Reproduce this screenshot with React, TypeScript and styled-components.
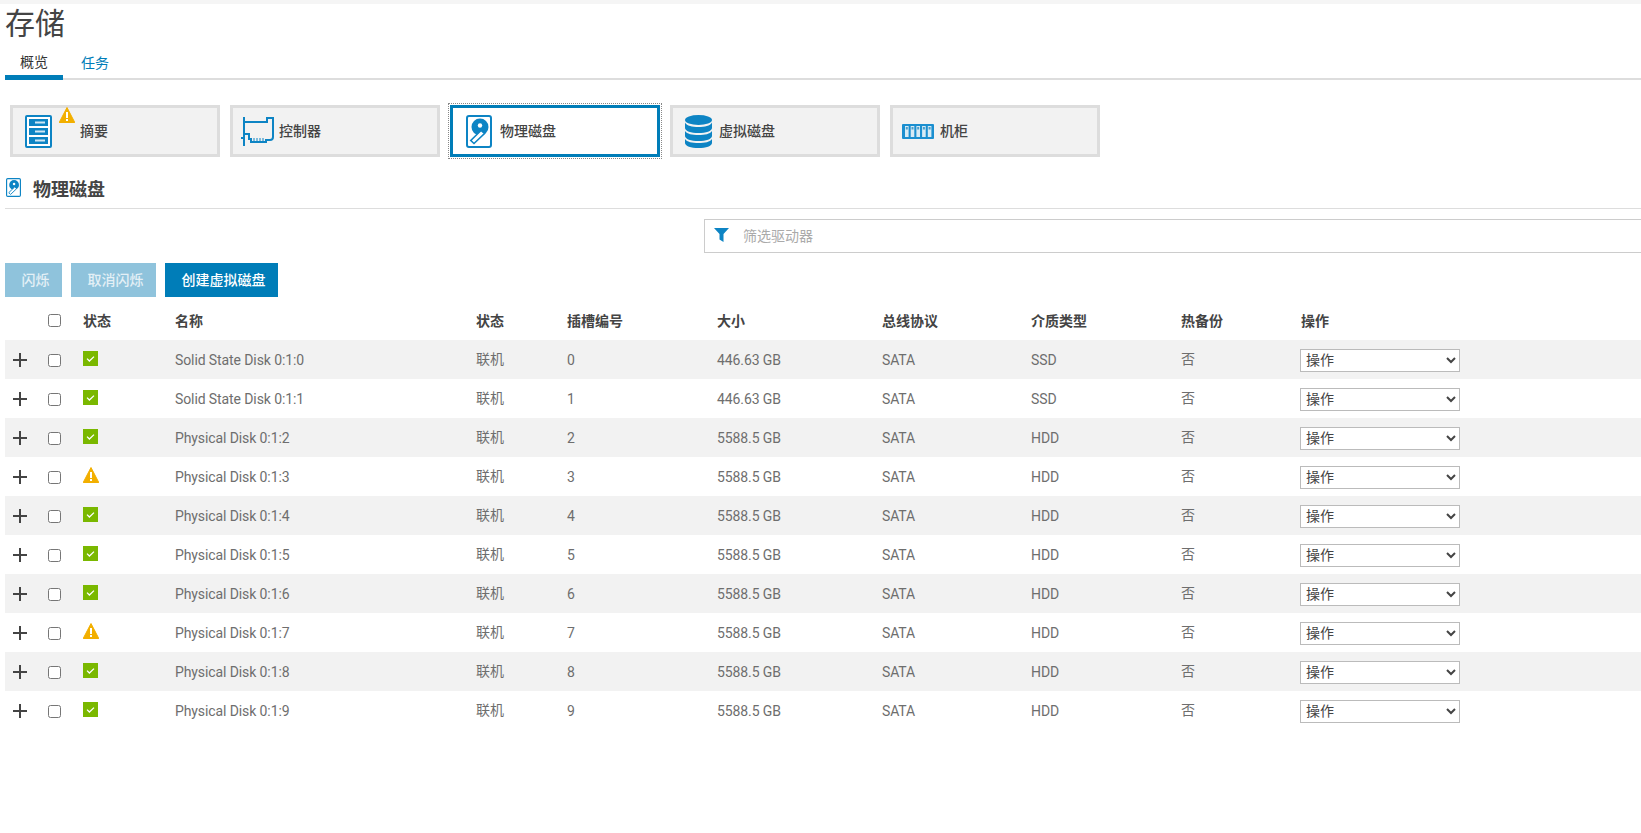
import styled, { createGlobalStyle } from "styled-components";

const GlobalStyle = createGlobalStyle`
  html, body {
    margin: 0;
    padding: 0;
    background: #fff;
    overflow-x: hidden;
  }
  body {
    font-family: Roboto, "Noto Sans CJK SC", sans-serif;
    color: #444;
  }
`;

const Page = styled.div`
  width: 1641px;
  height: 833px;
  overflow: hidden;
  border-top: 4px solid #f5f5f5;
  box-sizing: border-box;
  padding-left: 5px;
`;

const Title = styled.h1`
  margin: 0;
  height: 44px;
  font-size: 30px;
  line-height: 40px;
  font-weight: 400;
  color: #444;
`;

const Tabs = styled.div`
  display: flex;
  height: 30px;
  border-bottom: 2px solid #ddd;
  box-sizing: content-box;
`;

const Tab = styled.div<{ $active?: boolean }>`
  width: 58px;
  height: 27px;
  margin-right: 3px;
  box-sizing: content-box;
  text-align: center;
  font-size: 14px;
  line-height: ${(p) => (p.$active ? "29px" : "31px")};
  color: ${(p) => (p.$active ? "#333" : "#007db8")};
  border-bottom: ${(p) => (p.$active ? "5px solid #007db8" : "none")};
`;

const Cards = styled.div`
  display: flex;
  gap: 10px;
  margin: 25px 0 0 5px;
`;

const Card = styled.div<{ $active?: boolean; $left?: number; $gap?: number }>`
  position: relative;
  display: flex;
  align-items: center;
  width: 210px;
  height: 52px;
  box-sizing: border-box;
  padding-left: ${(p) => p.$left ?? 12}px;
  gap: ${(p) => p.$gap ?? 5}px;
  background: ${(p) => (p.$active ? "#fff" : "#f2f2f2")};
  border: 3px solid ${(p) => (p.$active ? "#007db8" : "#ddd")};
  outline: ${(p) => (p.$active ? "1px dotted #888" : "none")};
  outline-offset: 1px;
  font-size: 14px;
  font-weight: 500;
  color: #444;
`;

const CardWarn = styled.span`
  position: absolute;
  left: 46px;
  top: -1px;
  display: flex;
`;

const CardLabel = styled.span<{ $shift?: number }>`
  margin-left: ${(p) => p.$shift ?? 0}px;
  margin-bottom: 2px;
`;

const SectionHead = styled.div`
  display: flex;
  align-items: center;
  gap: 12px;
  height: 52px;
  padding: 10px 0 0 1px;
  box-sizing: border-box;
  border-bottom: 1px solid #ddd;
  font-size: 18px;
  font-weight: 700;
  color: #444;
`;

const FilterRow = styled.div`
  margin: 10px 0 0 699px;
  display: flex;
  align-items: center;
  width: 1000px;
  height: 34px;
  box-sizing: border-box;
  border: 1px solid #ccc;
  padding: 0 0 2px 9px;
  gap: 14px;
  font-size: 14px;
  color: #aaa;
`;

const Actions = styled.div`
  display: flex;
  gap: 9px;
  margin-top: 10px;
`;

const ActionButton = styled.div<{ $disabled?: boolean; $width: number }>`
  width: ${(p) => p.$width}px;
  height: 34px;
  box-sizing: border-box;
  padding-left: 4px;
  line-height: 34px;
  text-align: center;
  font-size: 14px;
  font-weight: 500;
  color: ${(p) => (p.$disabled ? "#e4f0f6" : "#fff")};
  background: ${(p) => (p.$disabled ? "#8fc3dc" : "#007db8")};
`;

const Table = styled.table`
  width: 1636px;
  border-collapse: collapse;
  table-layout: fixed;
  font-size: 14px;
  color: #6e6e6e;
`;

const HeadCell = styled.th`
  height: 43px;
  padding: 2px 0 0;
  box-sizing: border-box;
  text-align: left;
  font-weight: 700;
  font-size: 14px;
  color: #444;
`;

const Row = styled.tr`
  height: 39px;
  &:nth-child(odd) {
    background: #f2f2f2;
  }
`;

const Cell = styled.td`
  padding: 0;
  vertical-align: middle;
`;

const TextCell = styled(Cell)`
  letter-spacing: -0.1px;
`;

const CjkCell = styled(Cell)`
  font-family: "Noto Sans CJK SC", sans-serif;
  padding-bottom: 3px;
`;

const IconCell = styled(Cell)`
  line-height: 0;
  padding-bottom: 3px;
`;

const Check = styled.input.attrs({ type: "checkbox" })`
  display: block;
  width: 13px;
  height: 13px;
  margin: 1px 0 0 0;
`;

const ActionSelect = styled.select`
  display: block;
  width: 160px;
  height: 23px;
  margin: 1px 0 0 -1px;
  font-family: inherit;
  font-size: 14px;
  color: #444;
  background: #fff;
  border: 1px solid #bbb;
  border-radius: 0;
  padding: 0 0 0 1px;
`;

const PlusMark = styled.span`
  display: block;
  width: 14px;
  height: 14px;
  margin-left: 8px;
  background:
    linear-gradient(#444, #444) center / 14px 2px no-repeat,
    linear-gradient(#444, #444) center / 2px 14px no-repeat;
`;

const blue = "#0d84c4";

const WarnIcon = ({ size = 16 }: { size?: number }) => (
  <svg width={size} height={size} viewBox="0 0 16 16">
    <path d="M8 .5 15.8 15.5H.2Z" fill="#f2af00" stroke="#f2af00" strokeLinejoin="round" />
    <rect x="7" y="5" width="2" height="6" fill="#fff" />
    <rect x="7" y="12" width="2" height="2" fill="#fff" />
  </svg>
);

const OkIcon = () => (
  <svg width="15" height="15" viewBox="0 0 15 15">
    <rect width="15" height="15" fill="#7ab800" />
    <path d="M4 7.6 6.4 10 11 5.6" fill="none" stroke="#fff" strokeWidth="1.3" />
  </svg>
);

const SummaryIcon = () => (
  <svg width="27" height="33" viewBox="0 0 27 33">
    <rect x="1" y="1" width="25" height="31" rx="1" fill="#fff" stroke={blue} strokeWidth="2" />
    <rect x="4" y="4" width="19" height="7" fill={blue} />
    <rect x="4" y="13" width="19" height="7" fill={blue} />
    <rect x="4" y="22" width="19" height="7" fill={blue} />
    <rect x="10" y="6.5" width="10" height="2" fill="#cfe6f3" />
    <rect x="10" y="15.5" width="10" height="2" fill="#cfe6f3" />
    <rect x="10" y="24.5" width="10" height="2" fill="#cfe6f3" />
  </svg>
);

const ControllerIcon = () => (
  <svg width="33" height="29" viewBox="0 0 33 29" fill="none" stroke={blue}>
    <path d="M3 0V29" strokeWidth="2" />
    <path d="M0 21H3" strokeWidth="2" />
    <path d="M3 5H26V1H32V20C32 22 31 23 29 23H25V25H10V22H8V17H4" strokeWidth="2" />
    <path d="M13 24V21M16 24V21M19 24V21M22 24V21" strokeWidth="1" />
  </svg>
);

const DiskIcon = ({ small }: { small?: boolean }) => (
  <svg width={small ? 15 : 26} height={small ? 19 : 33} viewBox="0 0 26 33">
    <rect x="1" y="1" width="24" height="31" rx="2" fill="#fff" stroke={blue} strokeWidth="2" />
    <circle cx="14" cy="12" r="8.500" fill={blue} />
    <circle cx="14" cy="10.500" r="2.200" fill="#fff" />
    <path d="M8 28.500 4.800 25.500 15 15.500 18.500 18.500Z" fill="#fff" stroke={blue} strokeWidth="1.600" />
  </svg>
);

const DatabaseIcon = () => (
  <svg width="27" height="33" viewBox="0 0 27 33" fill={blue}>
    <ellipse cx="13.5" cy="5" rx="13.5" ry="5" />
    <path d="M0 7.500C2 11 7 12 13.500 12S25 11 27 7.500V13C27 16 21 18 13.500 18S0 16 0 13Z" />
    <path d="M0 16C2 19 7 20 13.500 20S25 19 27 16V21C27 24 21 26 13.500 26S0 24 0 21Z" />
    <path d="M0 24C2 27 7 28 13.500 28S25 27 27 24V28C27 31 21 33 13.500 33S0 31 0 28Z" />
  </svg>
);

const EnclosureIcon = () => (
  <svg width="32" height="15" viewBox="0 0 32 15">
    <rect width="32" height="15" rx="1" fill="#1b8fd0" />
    {[3, 8.7, 14.4, 20.1, 25.8].map((x) => (
      <g key={x}>
        <rect x={x} y="2" width="3.600" height="11" fill="#d8ebf5" />
        <rect x={x + 0.8} y="3" width="2" height="2.500" fill="#4a9ecb" />
      </g>
    ))}
  </svg>
);

const FunnelIcon = () => (
  <svg width="15" height="14" viewBox="0 0 15 14">
    <path d="M0 0H15L9.500 6V14L5.500 11.500V6Z" fill={blue} />
  </svg>
);

type Disk = {
  name: string;
  slot: number;
  size: string;
  media: string;
  warn?: boolean;
};

const disks: Disk[] = [
  { name: "Solid State Disk 0:1:0", slot: 0, size: "446.63 GB", media: "SSD" },
  { name: "Solid State Disk 0:1:1", slot: 1, size: "446.63 GB", media: "SSD" },
  { name: "Physical Disk 0:1:2", slot: 2, size: "5588.5 GB", media: "HDD" },
  { name: "Physical Disk 0:1:3", slot: 3, size: "5588.5 GB", media: "HDD", warn: true },
  { name: "Physical Disk 0:1:4", slot: 4, size: "5588.5 GB", media: "HDD" },
  { name: "Physical Disk 0:1:5", slot: 5, size: "5588.5 GB", media: "HDD" },
  { name: "Physical Disk 0:1:6", slot: 6, size: "5588.5 GB", media: "HDD" },
  { name: "Physical Disk 0:1:7", slot: 7, size: "5588.5 GB", media: "HDD", warn: true },
  { name: "Physical Disk 0:1:8", slot: 8, size: "5588.5 GB", media: "HDD" },
  { name: "Physical Disk 0:1:9", slot: 9, size: "5588.5 GB", media: "HDD" },
];

const columns = [43, 35, 92, 301, 91, 150, 165, 149, 150, 120, 340];

const App = () => {
  return (
    <Page>
      <GlobalStyle />
      <Title>存储</Title>
      <Tabs>
        <Tab $active>概览</Tab>
        <Tab>任务</Tab>
      </Tabs>
      <Cards>
        <Card>
          <SummaryIcon />
          <CardWarn>
            <WarnIcon />
          </CardWarn>
          <CardLabel $shift={23}>摘要</CardLabel>
        </Card>
        <Card $left={8}>
          <ControllerIcon />
          <CardLabel>控制器</CardLabel>
        </Card>
        <Card $active $left={13} $gap={8}>
          <DiskIcon />
          <CardLabel>物理磁盘</CardLabel>
        </Card>
        <Card $gap={7}>
          <DatabaseIcon />
          <CardLabel>虚拟磁盘</CardLabel>
        </Card>
        <Card $left={9} $gap={6}>
          <EnclosureIcon />
          <CardLabel>机柜</CardLabel>
        </Card>
      </Cards>
      <SectionHead>
        <DiskIcon small />
        物理磁盘
      </SectionHead>
      <FilterRow>
        <FunnelIcon />
        筛选驱动器
      </FilterRow>
      <Actions>
        <ActionButton $disabled $width={57}>闪烁</ActionButton>
        <ActionButton $disabled $width={85}>取消闪烁</ActionButton>
        <ActionButton $width={113}>创建虚拟磁盘</ActionButton>
      </Actions>
      <Table>
        <colgroup>
          {columns.map((w, i) => (
            <col key={i} style={{ width: w }} />
          ))}
        </colgroup>
        <thead>
          <tr>
            <HeadCell />
            <HeadCell>
              <Check />
            </HeadCell>
            <HeadCell>状态</HeadCell>
            <HeadCell>名称</HeadCell>
            <HeadCell>状态</HeadCell>
            <HeadCell>插槽编号</HeadCell>
            <HeadCell>大小</HeadCell>
            <HeadCell>总线协议</HeadCell>
            <HeadCell>介质类型</HeadCell>
            <HeadCell>热备份</HeadCell>
            <HeadCell>操作</HeadCell>
          </tr>
        </thead>
        <tbody>
          {disks.map((d) => (
            <Row key={d.name}>
              <Cell>
                <PlusMark />
              </Cell>
              <Cell>
                <Check />
              </Cell>
              <IconCell>{d.warn ? <WarnIcon /> : <OkIcon />}</IconCell>
              <TextCell>{d.name}</TextCell>
              <CjkCell>联机</CjkCell>
              <TextCell>{d.slot}</TextCell>
              <TextCell>{d.size}</TextCell>
              <TextCell>SATA</TextCell>
              <TextCell>{d.media}</TextCell>
              <CjkCell>否</CjkCell>
              <Cell>
                <ActionSelect defaultValue="操作">
                  <option>操作</option>
                </ActionSelect>
              </Cell>
            </Row>
          ))}
        </tbody>
      </Table>
    </Page>
  );
};

export default App;
